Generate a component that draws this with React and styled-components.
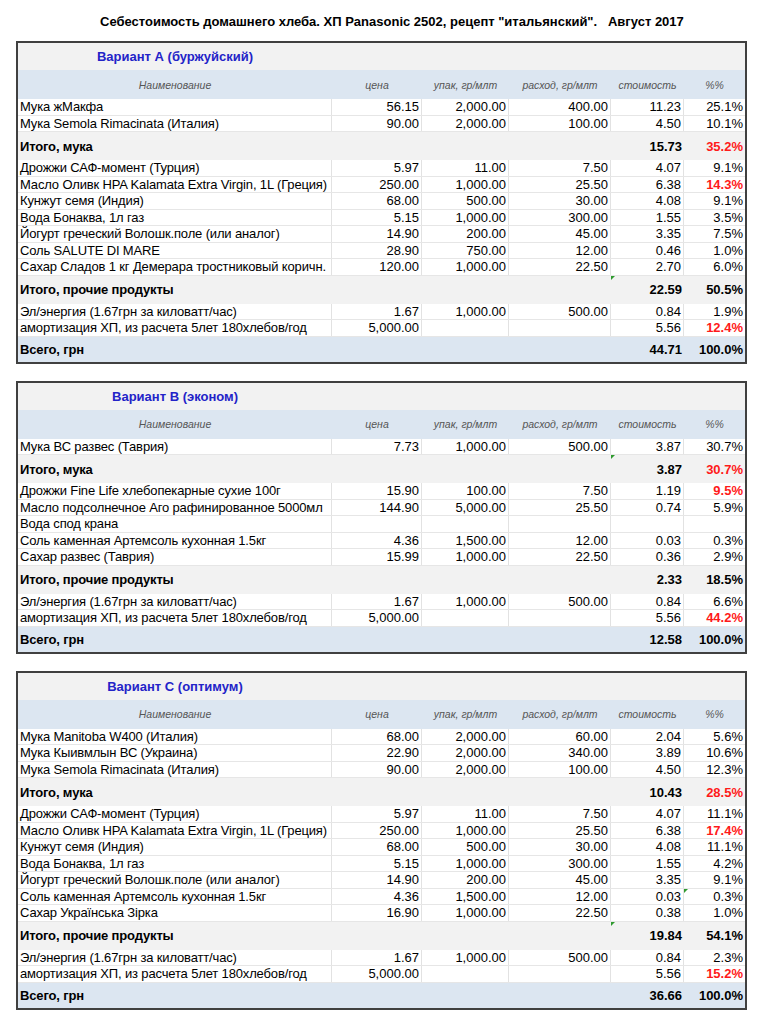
import React from 'react';
import styled, { createGlobalStyle } from 'styled-components';

const GlobalStyle = createGlobalStyle`
  body {
    margin: 0;
    background: #ffffff;
    font-family: "Liberation Sans", Arial, sans-serif;
    color: #000000;
  }
`;

const COLS = '314px 90px 87px 102px 73px 61px';

const Page = styled.div`
  width: 760px;
  padding: 14px 0 16px 16px;
  box-sizing: border-box;
`;

const PageTitle = styled.div`
  margin: 0 0 11px 84px;
  font-size: 13px;
  line-height: 16px;
  font-weight: bold;
  white-space: pre;
`;

const Sheets = styled.div`
  display: flex;
  flex-direction: column;
  gap: 17px;
`;

const Panel = styled.div`
  width: 731px;
  box-sizing: border-box;
  border: 2px solid #404040;
  display: flex;
  flex-direction: column;
`;

const Row = styled.div`
  display: grid;
  grid-template-columns: ${COLS};
  align-items: stretch;
  box-sizing: border-box;
`;

const TitleRow = styled(Row)`
  height: 27px;
  background: #f2f2f2;
`;

const HeaderRow = styled(Row)`
  height: 29px;
  background: #dce6f1;
`;

const DataRow = styled(Row)`
  height: 16.5px;
  background: #ffffff;
  border-bottom: 1px solid #e6e6e6;
`;

const SubtotalRow = styled(Row)`
  height: 28px;
  background: #f2f2f2;
  font-weight: bold;
`;

const TotalRow = styled(Row)`
  height: 25px;
  background: #dce6f1;
  font-weight: bold;
`;

const VariantTitle = styled.div`
  display: flex;
  align-items: center;
  justify-content: center;
  color: #2323c8;
  font-weight: bold;
  font-size: 13px;
`;

const HeadCell = styled.div`
  display: flex;
  align-items: center;
  justify-content: center;
  font-style: italic;
  font-size: 10.5px;
  color: #555555;
`;

const Cell = styled.div`
  position: relative;
  display: flex;
  align-items: center;
  justify-content: ${p => (p.$num ? 'flex-end' : 'flex-start')};
  padding: 0 2px;
  font-size: 13px;
  line-height: 15px;
  white-space: nowrap;
  overflow: hidden;
  letter-spacing: ${p => (p.$num ? '0' : '-0.15px')};
  color: ${p => (p.$red ? '#ff1a1a' : '#000000')};
  font-weight: ${p => (p.$red ? 'bold' : 'inherit')};
  border-right: ${p => (p.$lines ? '1px solid #e2e2e2' : 'none')};

  &:last-child {
    border-right: none;
  }
`;

const Flag = styled.span`
  position: absolute;
  left: 0;
  top: 0;
  width: 0;
  height: 0;
  border-top: 4px solid #2f9a2f;
  border-right: 4px solid transparent;
`;

const HEAD = ['Наименование', 'цена', 'упак, гр/млт', 'расход, гр/млт', 'стоимость', '%%'];

const variants = [
  {
    title: 'Вариант А (буржуйский)',
    flour: [
      ['Мука жМакфа', '56.15', '2,000.00', '400.00', '11.23', '25.1%'],
      ['Мука Semola Rimacinata (Италия)', '90.00', '2,000.00', '100.00', '4.50', '10.1%'],
    ],
    flourTotal: { cost: '15.73', pct: '35.2%', red: true },
    other: [
      ['Дрожжи САФ-момент (Турция)', '5.97', '11.00', '7.50', '4.07', '9.1%'],
      ['Масло Оливк HPA Kalamata Extra Virgin, 1L (Греция)', '250.00', '1,000.00', '25.50', '6.38', '14.3%', { red: true }],
      ['Кунжут семя (Индия)', '68.00', '500.00', '30.00', '4.08', '9.1%'],
      ['Вода Бонаква, 1л газ', '5.15', '1,000.00', '300.00', '1.55', '3.5%'],
      ['Йогурт греческий Волошк.поле (или аналог)', '14.90', '200.00', '45.00', '3.35', '7.5%'],
      ['Соль SALUTE DI MARE', '28.90', '750.00', '12.00', '0.46', '1.0%'],
      ['Сахар Сладов 1 кг Демерара тростниковый коричн.', '120.00', '1,000.00', '22.50', '2.70', '6.0%'],
    ],
    otherTotal: { cost: '22.59', pct: '50.5%', flag: true },
    extra: [
      ['Эл/энергия (1.67грн за киловатт/час)', '1.67', '1,000.00', '500.00', '0.84', '1.9%'],
      ['амортизация ХП, из расчета 5лет 180хлебов/год', '5,000.00', '', '', '5.56', '12.4%', { red: true }],
    ],
    total: { cost: '44.71', pct: '100.0%' },
  },
  {
    title: 'Вариант В (эконом)',
    flour: [
      ['Мука ВС развес (Таврия)', '7.73', '1,000.00', '500.00', '3.87', '30.7%'],
    ],
    flourTotal: { cost: '3.87', pct: '30.7%', red: true, flag: true },
    other: [
      ['Дрожжи Fine Life хлебопекарные сухие 100г', '15.90', '100.00', '7.50', '1.19', '9.5%', { red: true }],
      ['Масло подсолнечное Аго рафинированное 5000мл', '144.90', '5,000.00', '25.50', '0.74', '5.9%'],
      ['Вода спод крана', '', '', '', '', ''],
      ['Соль каменная Артемсоль кухонная 1.5кг', '4.36', '1,500.00', '12.00', '0.03', '0.3%'],
      ['Сахар развес (Таврия)', '15.99', '1,000.00', '22.50', '0.36', '2.9%'],
    ],
    otherTotal: { cost: '2.33', pct: '18.5%' },
    extra: [
      ['Эл/энергия (1.67грн за киловатт/час)', '1.67', '1,000.00', '500.00', '0.84', '6.6%'],
      ['амортизация ХП, из расчета 5лет 180хлебов/год', '5,000.00', '', '', '5.56', '44.2%', { red: true }],
    ],
    total: { cost: '12.58', pct: '100.0%' },
  },
  {
    title: 'Вариант С (оптимум)',
    flour: [
      ['Мука Manitoba W400 (Италия)', '68.00', '2,000.00', '60.00', '2.04', '5.6%'],
      ['Мука Кыивмлын ВС (Украина)', '22.90', '2,000.00', '340.00', '3.89', '10.6%'],
      ['Мука Semola Rimacinata (Италия)', '90.00', '2,000.00', '100.00', '4.50', '12.3%'],
    ],
    flourTotal: { cost: '10.43', pct: '28.5%', red: true },
    other: [
      ['Дрожжи САФ-момент (Турция)', '5.97', '11.00', '7.50', '4.07', '11.1%'],
      ['Масло Оливк HPA Kalamata Extra Virgin, 1L (Греция)', '250.00', '1,000.00', '25.50', '6.38', '17.4%', { red: true }],
      ['Кунжут семя (Индия)', '68.00', '500.00', '30.00', '4.08', '11.1%'],
      ['Вода Бонаква, 1л газ', '5.15', '1,000.00', '300.00', '1.55', '4.2%'],
      ['Йогурт греческий Волошк.поле (или аналог)', '14.90', '200.00', '45.00', '3.35', '9.1%'],
      ['Соль каменная Артемсоль кухонная 1.5кг', '4.36', '1,500.00', '12.00', '0.03', '0.3%', { flag: true }],
      ['Сахар Українська Зірка', '16.90', '1,000.00', '22.50', '0.38', '1.0%'],
    ],
    otherTotal: { cost: '19.84', pct: '54.1%', flag: true },
    extra: [
      ['Эл/энергия (1.67грн за киловатт/час)', '1.67', '1,000.00', '500.00', '0.84', '2.3%'],
      ['амортизация ХП, из расчета 5лет 180хлебов/год', '5,000.00', '', '', '5.56', '15.2%', { red: true }],
    ],
    total: { cost: '36.66', pct: '100.0%' },
  },
];

const Line = ({ row }) => {
  const [name, price, pack, use, cost, pct, opts = {}] = row;
  return (
    <DataRow>
      <Cell $lines>{name}</Cell>
      <Cell $lines $num>{price}</Cell>
      <Cell $lines $num>{pack}</Cell>
      <Cell $lines $num>{use}</Cell>
      <Cell $lines $num>{cost}</Cell>
      <Cell $num $red={opts.red}>
        {opts.flag && <Flag />}
        {pct}
      </Cell>
    </DataRow>
  );
};

const Subtotal = ({ label, data }) => (
  <SubtotalRow>
    <Cell>{label}</Cell>
    <Cell />
    <Cell />
    <Cell />
    <Cell $num>
      {data.flag && <Flag />}
      {data.cost}
    </Cell>
    <Cell $num $red={data.red}>{data.pct}</Cell>
  </SubtotalRow>
);

const Variant = ({ v }) => (
  <Panel>
    <TitleRow>
      <VariantTitle>{v.title}</VariantTitle>
    </TitleRow>
    <HeaderRow>
      {HEAD.map(h => (
        <HeadCell key={h}>{h}</HeadCell>
      ))}
    </HeaderRow>
    {v.flour.map(r => (
      <Line key={r[0]} row={r} />
    ))}
    <Subtotal label="Итого, мука" data={v.flourTotal} />
    {v.other.map(r => (
      <Line key={r[0]} row={r} />
    ))}
    <Subtotal label="Итого, прочие продукты" data={v.otherTotal} />
    {v.extra.map(r => (
      <Line key={r[0]} row={r} />
    ))}
    <TotalRow>
      <Cell>Всего, грн</Cell>
      <Cell />
      <Cell />
      <Cell />
      <Cell $num>{v.total.cost}</Cell>
      <Cell $num>{v.total.pct}</Cell>
    </TotalRow>
  </Panel>
);

export default function App() {
  return (
    <Page>
      <GlobalStyle />
      <PageTitle>
        {'Себестоимость домашнего хлеба. ХП Panasonic 2502, рецепт "итальянский".   Август 2017'}
      </PageTitle>
      <Sheets>
        {variants.map(v => (
          <Variant key={v.title} v={v} />
        ))}
      </Sheets>
    </Page>
  );
}
